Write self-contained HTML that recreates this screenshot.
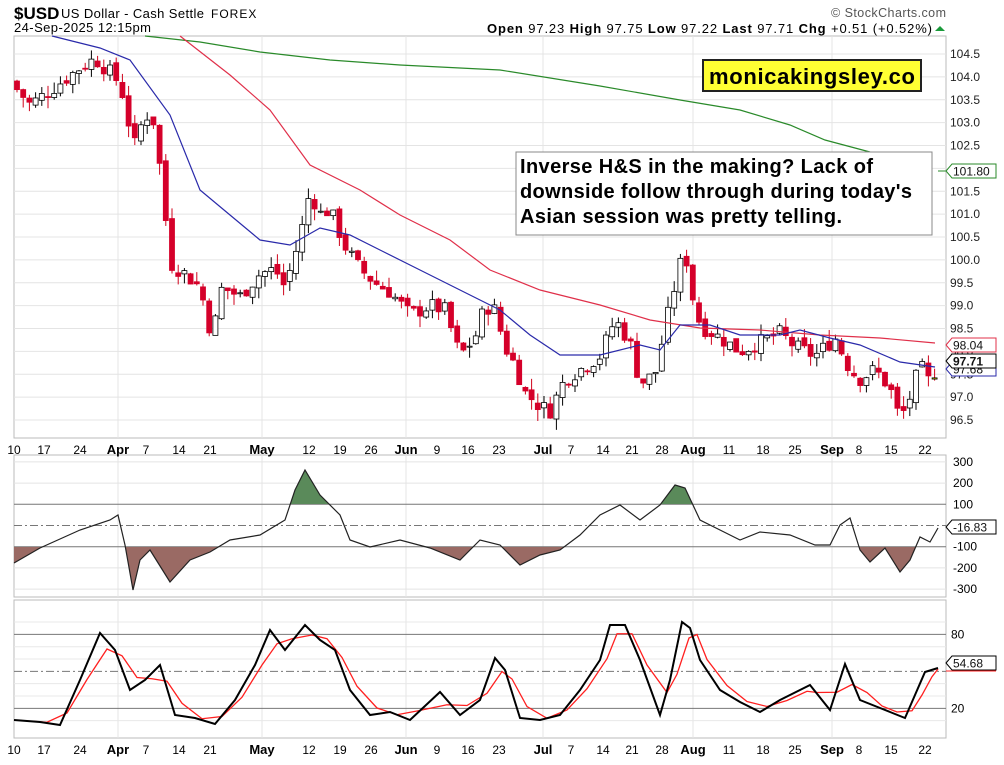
<!DOCTYPE html>
<html><head><meta charset="utf-8"><style>
body{margin:0;background:#fff;width:1004px;height:765px;overflow:hidden;font-family:"Liberation Sans",sans-serif}
svg{position:absolute;left:0;top:0}
text{font-family:"Liberation Sans",sans-serif}
</style></head><body>
<svg id="s" width="1004" height="765" viewBox="0 0 1004 765" xmlns="http://www.w3.org/2000/svg">
<defs>
<clipPath id="up"><rect x="14" y="455" width="932" height="49"/></clipPath>
<clipPath id="dn"><rect x="14" y="547" width="932" height="50"/></clipPath>
</defs>
<g id="grid"></g>
<g id="data"></g>
<!-- header -->
<text x="14" y="19" font-size="17" font-weight="bold">$USD</text>
<text x="61" y="18" font-size="13" textLength="143">US Dollar - Cash Settle</text>
<text x="211" y="18" font-size="12" letter-spacing="1">FOREX</text>
<text x="14" y="32" font-size="13" textLength="137">24-Sep-2025 12:15pm</text>
<text x="831" y="17" font-size="12.5" fill="#555" textLength="115">© StockCharts.com</text>
<text x="487" y="33" font-size="13" textLength="445"><tspan font-weight="bold">Open</tspan> 97.23  <tspan font-weight="bold">High</tspan> 97.75  <tspan font-weight="bold">Low</tspan> 97.22  <tspan font-weight="bold">Last</tspan> 97.71  <tspan font-weight="bold">Chg</tspan> +0.51 (+0.52%)</text>
<path d="M935 31 l5 -5 l5 5z" fill="#1a9a3a"/>
<!-- boxes -->
<g id="over">
<rect x="703" y="60" width="218" height="31" fill="#ffff33" stroke="#222" stroke-width="2"/>
<text x="709" y="84" font-size="22" font-weight="bold" textLength="206">monicakingsley.co</text>
<rect x="516" y="152" width="416" height="83" fill="#fff" stroke="#888"/>
<text x="520" y="173" font-size="20" font-weight="bold" textLength="353">Inverse H&amp;S in the making? Lack of</text>
<text x="520" y="198" font-size="20" font-weight="bold" textLength="392">downside follow through during today's</text>
<text x="520" y="223" font-size="20" font-weight="bold" textLength="322">Asian session was pretty telling.</text>
</g>
</svg>
<script>
const NS="http://www.w3.org/2000/svg";
const G=document.getElementById('grid'),D=document.getElementById('data');
function el(p,tag,a,txt){const e=document.createElementNS(NS,tag);for(const k in a)e.setAttribute(k,a[k]);if(txt!==undefined)e.textContent=txt;p.appendChild(e);return e;}
const L=14,R=946;
const py=p=>54+(104.5-p)*45.75;
[[36,438],[455,597],[600,738]].forEach(([t,b])=>el(G,'rect',{x:L,y:t,width:R-L,height:b-t,fill:'none',stroke:'#bbb'}));
for(let p=96.5;p<=104.5;p+=0.5){const y=py(p);el(G,'line',{x1:L,x2:R,y1:y,y2:y,stroke:'#e4e4e4'});el(G,'text',{x:950,y:y+4,'font-size':12,fill:'#222'},p.toFixed(1));}
const months=[118,262,406,543,693,832];
months.forEach(x=>{[[36,438],[455,597],[600,738]].forEach(([t,b])=>el(G,'line',{x1:x,x2:x,y1:t,y2:b,stroke:'#e4e4e4'}));});
const xl=[[14,'10'],[44,'17'],[80,'24'],[118,'Apr',1],[146,'7'],[179,'14'],[210,'21'],[262,'May',1],[309,'12'],[340,'19'],[371,'26'],[406,'Jun',1],[437,'9'],[468,'16'],[499,'23'],[543,'Jul',1],[571,'7'],[603,'14'],[632,'21'],[662,'28'],[693,'Aug',1],[729,'11'],[763,'18'],[795,'25'],[832,'Sep',1],[859,'8'],[891,'15'],[925,'22']];
[454,754].forEach(y=>xl.forEach(([x,t,b])=>el(G,'text',{x:x,y:y,'font-size':b?13:12,'font-weight':b?'bold':'normal','text-anchor':'middle'},t)));
const cy=c=>525.5-c*0.212;
[300,200,-200,-300].forEach(c=>{el(G,'line',{x1:L,x2:R,y1:cy(c),y2:cy(c),stroke:'#e4e4e4'});});
[100,-100].forEach(c=>el(G,'line',{x1:L,x2:R,y1:cy(c),y2:cy(c),stroke:'#777'}));
el(G,'line',{x1:L,x2:R,y1:cy(0),y2:cy(0),stroke:'#777','stroke-dasharray':'8 3 2 3'});
[[300,'300'],[200,'200'],[100,'100'],[-100,'-100'],[-200,'-200'],[-300,'-300']].forEach(([c,t])=>el(G,'text',{x:953,y:cy(c)+4,'font-size':12},t));
const sy=s=>733-s*1.233;
[90,70,60,40,30,10].forEach(s=>el(G,'line',{x1:L,x2:R,y1:sy(s),y2:sy(s),stroke:'#e8e8e8'}));
[80,20].forEach(s=>{el(G,'line',{x1:L,x2:R,y1:sy(s),y2:sy(s),stroke:'#777'});el(G,'text',{x:951,y:sy(s)+4,'font-size':12},s);});
el(G,'line',{x1:L,x2:R,y1:sy(50),y2:sy(50),stroke:'#777','stroke-dasharray':'8 3 2 3'});
const kp=[[14,103.8],[30,103.4],[50,103.7],[80,104.2],[95,104.4],[115,104.0],[125,103.5],[133,102.4],[145,103.2],[155,103.0],[165,101.0],[172,99.9],[185,99.7],[200,99.4],[212,98.3],[222,99.4],[240,99.2],[260,99.7],[275,99.8],[285,99.4],[300,100.5],[310,101.5],[320,101.0],[330,101.1],[345,100.3],[360,99.8],[375,99.5],[390,99.3],[410,98.8],[430,99.0],[445,98.9],[460,97.9],[475,98.3],[485,99.0],[495,98.9],[505,98.1],[515,97.7],[525,97.1],[540,96.8],[550,96.7],[565,97.4],[580,97.6],[600,97.9],[615,98.7],[630,98.2],[640,97.3],[655,97.5],[670,99.0],[680,99.9],[688,100.0],[695,98.8],[705,98.5],[720,98.3],[740,98.0],[760,98.2],[780,98.4],[795,98.1],[815,97.9],[835,98.3],[850,97.6],[860,97.4],[875,97.6],[890,97.2],[900,96.5],[910,97.0],[920,97.7],[930,97.3],[938,97.71]];
function interp(x){for(let i=1;i<kp.length;i++){if(x<=kp[i][0]){const a=kp[i-1],b=kp[i];return a[1]+(b[1]-a[1])*(x-a[0])/(b[0]-a[0]);}}return kp[kp.length-1][1];}
let seed=7;const rnd=()=>{seed=(seed*9301+49297)%233280;return seed/233280;};
let prev=103.9;
for(let x=17;x<=938;x+=6.2){
  const c=interp(x)+(rnd()-0.5)*0.35;
  const o=prev+(rnd()-0.5)*0.15;
  const h=Math.max(o,c)+rnd()*0.25,l=Math.min(o,c)-rnd()*0.25;
  const last=x>932;
  el(D,'line',{x1:x,x2:x,y1:py(h),y2:py(l),stroke:c>=o?'#000':'#d0021b'});
  const up=c>=o;
  el(D,'rect',{x:x-2.5,y:py(Math.max(o,c)),width:5,height:Math.max(1,Math.abs(py(o)-py(c))),fill:last?'#ffff00':(up?'#fff':'#d5002a'),stroke:up||last?'#000':'#d5002a','stroke-width':0.8});
  prev=c;
}
function line(pts,col,w){el(D,'polyline',{points:pts.map(p=>p.join(',')).join(' '),fill:'none',stroke:col,'stroke-width':w||1.2});}
line([[145,36],[200,42],[260,52],[330,60],[400,65],[500,70],[600,86],[680,100],[740,110],[790,125],[825,140],[870,152]],'#2a8a2a');
line([[180,36],[230,75],[270,110],[310,165],[360,190],[400,215],[450,240],[490,270],[540,290],[600,305],[650,320],[700,328],[760,330],[820,335],[880,338],[935,343]],'#e0304a');
line([[52,36],[100,48],[130,60],[170,115],[200,190],[230,215],[260,240],[290,245],[320,228],[350,235],[380,250],[420,270],[460,290],[500,310],[530,335],[560,355],[600,355],[640,345],[660,350],[680,325],[710,325],[740,335],[780,335],[800,330],[830,338],[860,345],[900,362],[935,367]],'#2a2aaa');
const cc=[[14,563],[40,548],[80,530],[110,520],[118,515],[125,545],[133,590],[140,560],[150,550],[170,582],[190,560],[210,552],[230,540],[260,535],[285,520],[295,490],[305,470],[320,495],[340,515],[350,540],[370,547],[400,540],[430,548],[460,560],[480,540],[500,545],[520,565],[540,555],[560,550],[580,535],[600,515],[620,505],[640,520],[660,505],[675,485],[685,488],[700,520],[720,530],[740,540],[760,532],[790,535],[815,545],[830,545],[840,525],[850,518],[860,550],[870,562],[885,548],[900,572],[910,560],[920,537],[930,542],[938,528]];
const ps=cc.map(p=>p.join(',')).join(' ');
el(D,'polygon',{points:'14,504 '+ps+' 938,504','clip-path':'url(#up)',fill:'#5a8a5a',stroke:'none'});
el(D,'polygon',{points:'14,547 '+ps+' 938,547','clip-path':'url(#dn)',fill:'#9a6a64',stroke:'none'});
line(cc,'#222',1.2);
const k=[[14,720],[40,722],[60,725],[80,680],[100,633],[115,650],[130,690],[145,680],[160,665],[175,715],[195,718],[215,724],[235,700],[255,665],[270,630],[285,650],[305,625],[320,640],[335,650],[350,690],[370,715],[390,712],[410,720],[440,692],[460,715],[480,700],[495,658],[505,670],[520,718],[540,720],[560,715],[580,690],[600,660],[610,625],[625,625],[640,660],[660,715],[670,680],[682,622],[690,628],[700,660],[720,690],[740,702],[760,712],[780,700],[800,690],[810,685],[830,710],[845,664],[860,700],[875,706],[890,712],[905,718],[915,695],[925,672],[938,668]];
const d=k.map((p,i)=>{const a=k[Math.max(0,i-1)][1],b=p[1],c=k[Math.min(k.length-1,i+1)][1];return [Math.min(938,p[0]+7),(a+2*b+c)/4];});
line(d,'#ff2020',1.3);
line(k,'#000',2);
function tag(y,txt,col,bold){el(D,'path',{d:`M946 ${y} l6 -7 h44 v14 h-44z`,fill:'#fff',stroke:col});el(D,'text',{x:953,y:y+4.5,'font-size':12,'font-weight':bold?'bold':'normal',fill:'#111'},txt);}
tag(369,'97.68','#2a2aaa');tag(345,'98.04','#e0304a');tag(361,'97.71','#000',1);tag(171,'101.80','#2a8a2a');
tag(527,'-16.83','#000');tag(663,'54.68','#000');
el(D,'line',{x1:946,x2:996,y1:671,y2:671,stroke:'#ff2020'});
el(D,'line',{x1:938,x2:946,y1:171,y2:171,stroke:'#2a8a2a'});
document.getElementById('s').appendChild(document.getElementById('over'));
</script>
</body></html>
